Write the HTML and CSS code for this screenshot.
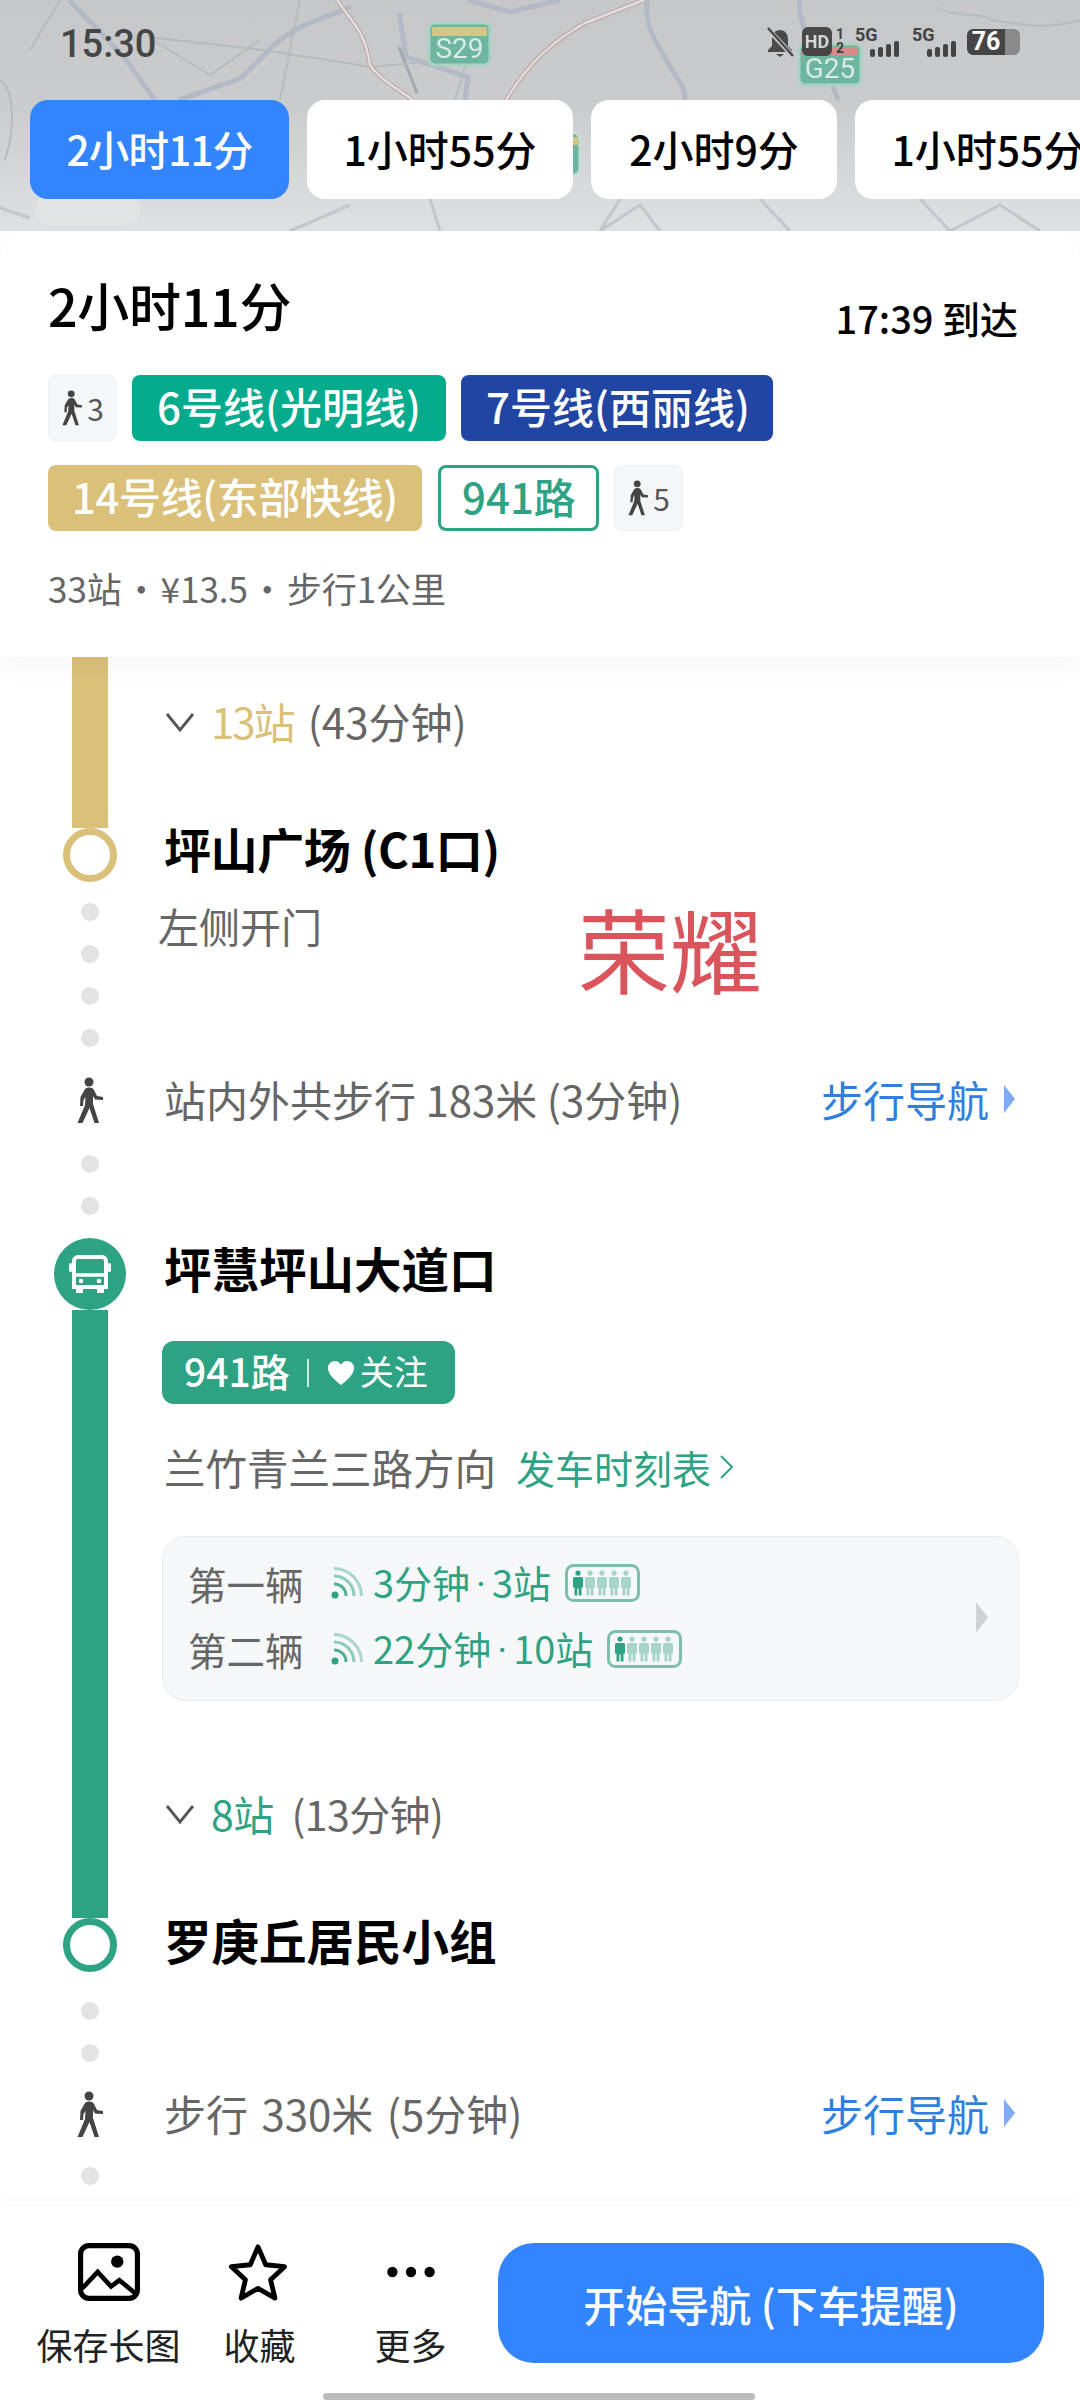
FILE: index.html
```html
<!DOCTYPE html>
<html lang="zh-CN">
<head>
<meta charset="utf-8">
<title>路线详情</title>
<link rel="stylesheet" href="styles.css">
</head>
<body>
<svg width="0" height="0" class="defs">
  <defs>
    <symbol id="walker" viewBox="0 0 28 47">
      <circle cx="13" cy="5" r="4.5" fill="currentColor"/>
      <path d="M9 12C12 10 16 10 18 13L21 19L27 20V23L19 22.500L17 19L17 27L23 46H18.500L13.500 31L6.500 46H1.500L9 28L9.500 20L7.500 23L7 29H4L4.500 20Z" fill="currentColor"/>
    </symbol>
    <symbol id="person" viewBox="0 0 10 24" overflow="visible">
      <circle cx="5" cy="2.600" r="2.600" fill="currentColor"/>
      <path d="M0 8a1.500 1.500 0 0 1 1.500-1.500h7A1.500 1.500 0 0 1 10 8v9H8.500v8H5.700v-7h-1.400v7H1.500v-8H0z" fill="currentColor"/>
    </symbol>
    <symbol id="crowd" viewBox="0 0 75 38">
      <rect x="1.500" y="1.500" width="72" height="35" rx="7" fill="none" stroke="#7dbfab" stroke-width="3"/>
      <use href="#person" x="8" y="6" width="10" height="25" class="p-on"/>
      <use href="#person" x="20" y="6" width="10" height="25" class="p-off"/>
      <use href="#person" x="32" y="6" width="10" height="25" class="p-off"/>
      <use href="#person" x="44" y="6" width="10" height="25" class="p-off"/>
      <use href="#person" x="56" y="6" width="10" height="25" class="p-off"/>
    </symbol>
    <symbol id="signal" viewBox="0 0 32 32">
      <circle cx="4" cy="28" r="3.500" fill="#2ea383"/>
      <path d="M3 17c7 0 12 5 12 12" fill="none" stroke="#4fb095" stroke-width="3"/>
      <path d="M3 9c11 0 20 9 20 20" fill="none" stroke="#8ecab8" stroke-width="3"/>
      <path d="M3 1.500c15 0 27.500 12.500 27.500 27.500" fill="none" stroke="#a9d6c9" stroke-width="3"/>
    </symbol>
    <symbol id="chev" viewBox="0 0 30 30">
      <path d="M2 8l13 16L28 8" fill="none" stroke="#555" stroke-width="2.800"/>
    </symbol>
    <symbol id="tri" viewBox="0 0 13 30">
      <path d="M1 1l11 14L1 29z" fill="currentColor"/>
    </symbol>
  </defs>
</svg>
<div class="page">
  <header class="head">
    <svg class="map" viewBox="0 0 1080 231" aria-hidden="true">
      <g fill="none" stroke="#b3bac6" stroke-width="5">
        <path d="M351 7C320 20 290 25 262 57L241 78L179 100"/>
        <path d="M69 0L124 57L155 100"/>
        <path d="M468 0L510 12L560 0"/>
        <path d="M647 0C645 30 655 40 675 75C682 85 685 90 685 100"/>
        <path d="M399 13L406 57L468 77L465 100"/>
        <path d="M800 0C795 30 830 70 838 100"/>
      </g>
      <g fill="none" stroke="#a4a8ae" stroke-width="3">
        <path d="M399 47L417 93"/>
      </g>
      <g fill="none" stroke="#b5bcc0" stroke-width="2">
        <path d="M260 40L210 75L148 37L262 50L372 67L441 60"/>
        <path d="M0 80C15 90 15 130 5 160"/>
        <path d="M937 7C960 20 975 10 992 20C1020 25 1050 30 1080 20"/>
        <path d="M30 50L60 0"/>
        <path d="M300 0L280 100"/>
        <path d="M470 50L455 100"/>
      </g>
      <g fill="none" stroke="#c4aeb0" stroke-width="5">
        <path d="M337 0C350 20 365 30 370 65C380 80 400 90 413 100"/>
        <path d="M644 0L585 23C555 40 530 60 506 100"/>
      </g>
      <g fill="none" stroke="#e4e4e2" stroke-width="2">
        <path d="M337 0C350 20 365 30 370 65C380 80 400 90 413 100"/>
        <path d="M644 0L585 23C555 40 530 60 506 100"/>
      </g>
      <g fill="none" stroke="#c2c7cc" stroke-width="3">
        <path d="M0 208L30 218"/>
        <path d="M290 231L350 205"/>
        <path d="M430 199L440 231"/>
        <path d="M620 199L600 231L640 205L660 231"/>
        <path d="M760 199L790 231"/>
        <path d="M920 199L950 231L1000 205L1040 231"/>
      </g>
      <rect x="35" y="195" width="105" height="30" rx="15" fill="#e6e7e7" opacity=".6"/>
      <g class="shield">
        <rect x="429" y="23" width="61" height="42" rx="6" fill="#6db5a0" stroke="#a9d2c5" stroke-width="3"/>
        <rect x="432" y="27" width="55" height="9" fill="#d9c487"/>
        <text x="459.500" y="58" class="shield-text">S29</text>
        <rect x="799" y="44" width="62" height="41" rx="6" fill="#6db5a0" stroke="#a9d2c5" stroke-width="3"/>
        <rect x="802" y="47" width="56" height="8" fill="#dd8a8a"/>
        <text x="830" y="78" class="shield-text">G25</text>
        <rect x="530" y="133" width="50" height="42" rx="6" fill="#6db5a0" stroke="#c8dcd6" stroke-width="3"/>
        <rect x="533" y="137" width="45" height="8" fill="#d9c487"/>
      </g>
    </svg>
    <div class="status">
      <span class="clock">15:30</span>
      <div class="status-icons">
        <svg class="bell" viewBox="0 0 28 30"><path d="M14 3c-5 0-8 4-8 9v7l-4 4v2h24v-2l-4-4v-7c0-5-3-9-8-9z" fill="#4a4a4a"/><path d="M10 27h8l-4 3z" fill="#4a4a4a"/><path d="M1 1l26 28" stroke="#c6c8ca" stroke-width="5"/><path d="M2 1l25 28" stroke="#4a4a4a" stroke-width="2.500"/></svg>
        <span class="hd">HD</span>
        <span class="sim"><i>1</i><i>2</i></span>
        <span class="net">
          <span class="net-label">5G</span>
          <span class="bars"><i></i><i></i><i></i><i></i></span>
        </span>
        <span class="net net-b">
          <span class="net-label">5G</span>
          <span class="bars"><i></i><i></i><i></i><i></i></span>
        </span>
        <span class="batt"><span class="batt-num">76</span></span>
      </div>
    </div>
    <nav class="tabs">
      <div class="tab tab-on tab-w1">2小时11分</div>
      <div class="tab tab-w2">1小时55分</div>
      <div class="tab tab-w3">2小时9分</div>
      <div class="tab tab-w4">1小时55分</div>
    </nav>
  </header>

  <section class="card">
    <div class="card-top">
      <h1 class="dur">2小时11分</h1>
      <span class="arrive">17:39 到达</span>
    </div>
    <div class="pill-row">
      <span class="walk-chip"><svg class="walk-mini"><use href="#walker"/></svg>3</span>
      <span class="pill pill-teal">6号线(光明线)</span>
      <span class="pill pill-navy">7号线(西丽线)</span>
    </div>
    <div class="pill-row">
      <span class="pill pill-gold">14号线(东部快线)</span>
      <span class="pill pill-line">941路</span>
      <span class="walk-chip"><svg class="walk-mini"><use href="#walker"/></svg>5</span>
    </div>
    <p class="summary">33站 · ¥13.5 · 步行1公里</p>
  </section>

  <main class="route">
    <div class="wm">荣耀</div>

    <div class="row seg-a">
      <div class="rail"><span class="bar bar-gold"></span></div>
      <div class="stops"><svg class="chev"><use href="#chev"/></svg><span class="c-gold">13站</span><span class="c-grey">(43分钟)</span></div>
    </div>

    <div class="row station">
      <div class="rail"><span class="ring ring-gold"></span></div>
      <div class="st-name st-up7">坪山广场 (C1口)</div>
    </div>

    <div class="row seg-dots1">
      <div class="rail rail-dots"><i class="dot"></i><i class="dot"></i><i class="dot"></i><i class="dot"></i></div>
      <div class="door">左侧开门</div>
    </div>

    <div class="row walk">
      <div class="rail"><svg class="walker"><use href="#walker"/></svg></div>
      <div class="walk-text">站内外共步行 183米 (3分钟)</div>
      <div class="walk-nav">步行导航<svg class="tri"><use href="#tri"/></svg></div>
    </div>

    <div class="row seg-dots2">
      <div class="rail rail-dots"><i class="dot"></i><i class="dot"></i></div>
    </div>

    <div class="row bus-head">
      <div class="rail">
        <span class="bus-badge">
          <svg class="bus" viewBox="0 0 42 38"><path d="M9 2h24a4 4 0 0 1 4 4v26H5V6a4 4 0 0 1 4-4z" fill="none" stroke="#fff" stroke-width="4"/><path d="M6 20h30" stroke="#fff" stroke-width="3.500"/><rect x="0" y="8" width="3" height="9" rx="1.500" fill="#fff"/><rect x="39" y="8" width="3" height="9" rx="1.500" fill="#fff"/><rect x="7" y="31" width="7" height="7" fill="#fff"/><rect x="28" y="31" width="7" height="7" fill="#fff"/><circle cx="12" cy="26" r="2.300" fill="#fff"/><circle cx="30" cy="26" r="2.300" fill="#fff"/></svg>
        </span>
      </div>
      <div class="st-name st-bus">坪慧坪山大道口</div>
    </div>

    <div class="row seg-bus">
      <div class="rail"><span class="bar bar-green"></span></div>
      <div class="bus-body">
        <div class="line-tag"><span class="line-no">941路</span><i class="sep"></i><svg class="heart" viewBox="0 0 30 28"><path d="M15 27C5 19 1 14 1 8.500 1 4 4.500 1 8.500 1c3 0 5 1.500 6.500 4 1.500-2.500 3.500-4 6.500-4C25.500 1 29 4 29 8.500 29 14 25 19 15 27z" fill="#fff"/></svg><span class="follow">关注</span></div>
        <div class="dir"><span class="dir-t">兰竹青兰三路方向</span><span class="timetable">发车时刻表</span><svg class="tt-chev" viewBox="0 0 15 26"><path d="M2 2l11 11L2 24" fill="none" stroke="#2ea383" stroke-width="2"/></svg></div>
        <div class="panel">
          <div class="bus-line"><span class="nth">第一辆</span><svg class="sig"><use href="#signal"/></svg><span class="eta">3分钟<span class="mid">·</span>3站</span><svg class="crowd"><use href="#crowd"/></svg></div>
          <div class="bus-line"><span class="nth">第二辆</span><svg class="sig"><use href="#signal"/></svg><span class="eta">22分钟<span class="mid">·</span>10站</span><svg class="crowd"><use href="#crowd"/></svg></div>
          <svg class="panel-tri"><use href="#tri"/></svg>
        </div>
        <div class="stops stops-b"><svg class="chev"><use href="#chev"/></svg><span class="c-green">8站</span><span class="c-grey">(13分钟)</span></div>
      </div>
    </div>

    <div class="row station">
      <div class="rail"><span class="ring ring-green"></span></div>
      <div class="st-name st-up4">罗庚丘居民小组</div>
    </div>

    <div class="row seg-dots3">
      <div class="rail rail-dots"><i class="dot"></i><i class="dot"></i></div>
    </div>

    <div class="row walk">
      <div class="rail"><svg class="walker"><use href="#walker"/></svg></div>
      <div class="walk-text walk-wide">步行 330米 (5分钟)</div>
      <div class="walk-nav">步行导航<svg class="tri"><use href="#tri"/></svg></div>
    </div>

    <div class="row seg-dots4">
      <div class="rail rail-dots"><i class="dot"></i></div>
    </div>
  </main>

  <footer class="foot">
    <div class="foot-main">
      <div class="act">
        <svg class="act-ic" viewBox="0 0 60 56"><rect x="2.500" y="2.500" width="55" height="51" rx="8" fill="none" stroke="#000" stroke-width="5"/><circle cx="38" cy="18" r="6" fill="#000"/><path d="M4 44l15-16 13 14 8-6 16 13" fill="none" stroke="#000" stroke-width="4.500"/></svg>
        <span class="act-t">保存长图</span>
      </div>
      <div class="act">
        <svg class="act-ic act-star" viewBox="0 0 62 60"><path d="M31 4l8 18.500 19.500 2-14.500 13.500 4.500 19L31 47l-17.500 10 4.500-19L3.500 24.500l19.500-2z" fill="none" stroke="#000" stroke-width="5" stroke-linejoin="round"/></svg>
        <span class="act-t">收藏</span>
      </div>
      <div class="act">
        <svg class="act-ic" viewBox="0 0 60 56"><circle cx="12" cy="28" r="5" fill="#000"/><circle cx="30" cy="28" r="5" fill="#000"/><circle cx="48" cy="28" r="5" fill="#000"/></svg>
        <span class="act-t">更多</span>
      </div>
      <button class="go">开始导航 (下车提醒)</button>
    </div>
    <div class="home-bar"></div>
  </footer>
</div>
</body>
</html>
```
FILE: styles.css
```css
* { box-sizing: border-box; margin: 0; padding: 0; }
html, body { width: 1080px; height: 2400px; overflow: hidden; background: #fff; }
body { font-family: "Noto Sans CJK SC", "Noto Sans", sans-serif; color: #000; }
i { font-style: normal; display: block; }
.defs { position: absolute; }
.page { width: 1080px; height: 2400px; display: flex; flex-direction: column; overflow: hidden; }

/* header over the map */
.head { position: relative; height: 231px; flex: none; overflow: hidden; background: linear-gradient(#c5c7c9 0, #c9cbcc 100px, #dfe0e1 231px); }
.map { position: absolute; left: 0; top: 0; width: 1080px; height: 231px; filter: blur(.6px); }
.shield-text { font-family: "Roboto", sans-serif; font-size: 28px; fill: #d8ebe5; text-anchor: middle; }
.status { position: relative; height: 100px; display: flex; justify-content: space-between; padding: 27px 60px 0 60px; }
.clock { font-family: "Roboto", sans-serif; font-size: 38px; font-weight: 500; line-height: 34px; color: #454545; }
.status-icons { position: relative; display: flex; align-items: flex-start; height: 32px; }
.bell { width: 28px; height: 30px; }
.hd { width: 30px; height: 29px; margin-left: 8px; border-radius: 6px; background: #3f3f3f; opacity: .92; color: #d8d8d8; font: 700 18px/29px "Roboto", sans-serif; text-align: center; }
.sim { width: 12px; margin-left: 4px; font: 700 14px/14px "Roboto", sans-serif; color: #3f3f3f; }
.net { position: relative; width: 44px; height: 30px; margin-left: 7px; }
.net-b { margin-left: 13px; }
.net-label { position: absolute; left: 0; top: 0; font: 700 18px/16px "Roboto", sans-serif; color: #444; }
.bars { position: absolute; right: 0; bottom: 0; display: flex; align-items: flex-end; gap: 3px; }
.bars i { width: 5px; background: #444; border-radius: 2px; height: 8px; }
.bars i:nth-child(2) { height: 10px; }
.bars i:nth-child(3) { height: 13px; }
.bars i:nth-child(4) { height: 16px; }
.batt { width: 53px; height: 26px; margin: 2px 0 0 11px; border-radius: 6px; background: linear-gradient(90deg, #454545 0 38px, #8a8a8a 38px); text-align: left; }
.batt-num { display: block; width: 38px; text-align: center; font: 700 25px/26px "Roboto", sans-serif; color: #fff; }

.tabs { position: relative; display: flex; gap: 18px; padding-left: 30px; }
.tab { flex: none; height: 99px; border-radius: 18px; background: #fff; font-size: 41px; font-weight: 500; line-height: 97px; text-align: center; white-space: nowrap; }
.tab-on { background: #3385ff; color: #fff; font-size: 40.500px; letter-spacing: -.8px; }
.tab-w1 { width: 259px; }
.tab-w2 { width: 266px; }
.tab-w3 { width: 246px; }
.tab-w4 { width: 266px; }

/* summary card */
.card { position: relative; z-index: 2; flex: none; height: 426px; padding: 0 62px 0 48px; background: #fff; border-radius: 30px 30px 0 0; box-shadow: 0 10px 24px rgba(0, 0, 0, .045); }
.card-top { display: flex; justify-content: space-between; align-items: flex-end; height: 105px; margin-bottom: 39px; }
.dur { font-size: 52px; font-weight: 500; line-height: 70px; letter-spacing: -.3px; position: relative; top: 4px; }
.arrive { font-size: 38px; line-height: 50px; font-weight: 500; position: relative; top: 7px; }
.pill-row { display: flex; gap: 15px; height: 66px; margin-bottom: 24px; }
.walk-chip { display: flex; align-items: center; justify-content: center; gap: 4px; width: 69px; height: 66px; border-radius: 8px; background: #f5f6f8; border: 1px solid #eef0f2; color: #555; font-size: 30px; }
.walk-mini { width: 22px; height: 36px; color: #444; flex: none; }
.pill { height: 66px; border-radius: 8px; padding: 0 25px; font-size: 42px; font-weight: 500; line-height: 62px; color: #fff; white-space: nowrap; }
.pill-teal { background: #05ab8d; width: 314px; }
.pill-navy { background: #2145a2; width: 312px; }
.pill-gold { background: #dac079; width: 374px; padding: 0 24px; letter-spacing: -.4px; }
.pill-line { width: 161px; margin-left: 1px; background: #fff; border: 3px solid #2ea383; color: #2ea383; line-height: 56px; padding: 0 21px; }
.summary { margin-top: 42px; font-size: 35px; line-height: 30px; color: #666; white-space: nowrap; word-spacing: -6px; }

/* route */
.route { position: relative; flex: 1; min-height: 0; overflow: hidden; }
.wm { position: absolute; left: 578px; top: 244px; font-size: 92px; line-height: 92px; color: #d9545b; z-index: 1; }
.row { display: flex; align-items: stretch; padding-right: 61px; }
.rail { flex: none; width: 165px; padding-left: 15px; display: flex; flex-direction: column; align-items: center; }
.rail-dots { gap: 24px; }
.dot { width: 18px; height: 18px; flex: none; border-radius: 50%; background: #e3e3e3; }
.bar { display: block; width: 36px; flex: 1; }
.bar-gold { background: #dac079; }
.bar-green { background: #2ea383; }
.seg-a { height: 171px; }
.stops { display: flex; align-items: center; height: 56px; margin-top: 36px; font-size: 42px; line-height: 56px; white-space: nowrap; }
.chev { width: 30px; height: 30px; margin-right: 16px; }
.c-gold { color: #dac079; margin-right: 14px; letter-spacing: -2px; }
.c-green { color: #2ea383; margin-right: 18px; }
.c-grey { color: #666; }
.station { height: 54px; align-items: center; }
.st-name { margin-left: -1px; font-size: 47.500px; font-weight: 700; line-height: 54px; white-space: nowrap; }
.st-up7 { position: relative; top: -7px; font-size: 47px; letter-spacing: -.4px; }
.st-up4 { position: relative; top: -5px; }
.ring { width: 54px; height: 54px; border-radius: 50%; background: #fff; border: 7px solid; }
.ring-gold { border-color: #dac079; }
.ring-green { border-color: #2ea383; }
.seg-dots1 { height: 190px; padding-top: 21px; }
.door { margin: -3px 0 0 -7px; font-size: 41px; line-height: 50px; color: #666; }
.walk { height: 56px; align-items: center; }
.walker { width: 28px; height: 47px; color: #444; flex: none; }
.walk .rail { justify-content: center; }
.walk-text { flex: 1; margin: -2px 0 0 -1px; font-size: 42px; line-height: 56px; color: #666; white-space: nowrap; }
.walk-wide { word-spacing: 4px; }
.walk-nav { display: flex; align-items: center; gap: 14px; margin: -2px 3px 0 0; font-size: 42px; line-height: 56px; color: #2f7fe0; white-space: nowrap; }
.tri { width: 13px; height: 30px; color: #7fabf2; }
.seg-dots2 { height: 110px; padding-top: 27px; }
.bus-head { height: 72px; align-items: center; }
.bus-badge { width: 72px; height: 72px; border-radius: 50%; background: #2ea383; display: flex; align-items: center; justify-content: center; }
.bus { width: 42px; height: 38px; }
.st-bus { margin-top: -12px; }
.seg-bus { height: 608px; }
.bus-body { flex: 1; min-width: 0; margin-left: -3px; }
.line-tag { display: flex; align-items: center; width: 293px; height: 63px; margin-top: 31px; padding-left: 22px; border-radius: 12px; background: #2ea383; color: #fff; }
.line-no { margin-top: -4px; font-size: 39px; font-weight: 500; line-height: 63px; }
.sep { width: 2px; height: 28px; margin: 0 18px 0 17px; background: #cfe9e1; }
.heart { width: 28px; height: 26px; margin-right: 5px; }
.follow { margin-top: -4px; font-size: 34px; line-height: 63px; }
.dir { display: flex; align-items: center; height: 56px; margin: 35px 0 41px 2px; white-space: nowrap; }
.dir-t { font-size: 41.500px; line-height: 56px; color: #666; margin-right: 20px; }
.timetable { font-size: 39px; line-height: 56px; color: #2ea383; margin-right: 8px; }
.tt-chev { width: 15px; height: 26px; }
.panel { position: relative; width: 857px; height: 165px; padding: 13px 0 0 25px; border-radius: 24px; background: #f5f7f9; border: 1px solid #e9ebed; }
.bus-line { display: flex; align-items: center; height: 66px; white-space: nowrap; }
.nth { width: 143px; font-size: 38.500px; line-height: 66px; color: #666; }
.sig { width: 32px; height: 32px; margin-right: 10px; }
.eta { font-size: 38px; line-height: 66px; color: #2ea383; margin-right: 14px; }
.mid { margin: 0 6px; font-family: "Roboto", sans-serif; }
.crowd { width: 75px; height: 38px; }
.p-on { color: #2ea383; }
.p-off { color: #a6d4c6; }
.panel-tri { position: absolute; right: 29px; top: 64px; width: 14px; height: 33px; color: #cfd0d2; }
.stops-b { margin: 84px 0 0 3px; font-size: 41px; letter-spacing: -.6px; }

.seg-dots3 { height: 114px; padding-top: 30px; }
.seg-dots4 { padding-top: 25px; height: 63px; }

/* footer */
.foot { position: relative; z-index: 2; flex: none; height: 193px; padding: 36px 36px 0 33px; background: #fff; box-shadow: 0 -4px 14px rgba(0, 0, 0, .025); }
.foot-main { display: flex; align-items: flex-start; height: 120px; }
.act { flex: none; width: 151px; display: flex; flex-direction: column; align-items: center; }
.act-ic { width: 62px; height: 58px; }
.act-star { position: relative; left: -2px; }
.act-t { margin-top: 16px; font-size: 36px; line-height: 54px; color: #222; white-space: nowrap; }
.go { flex: none; width: 546px; height: 120px; margin-left: 12px; border: 0; border-radius: 36px; background: #3385ff; color: #fff; font-family: inherit; font-size: 42px; font-weight: 500; }
.home-bar { width: 432px; height: 7px; margin: 30px auto 0; border-radius: 4px; background: #bdbdbd; }
```
